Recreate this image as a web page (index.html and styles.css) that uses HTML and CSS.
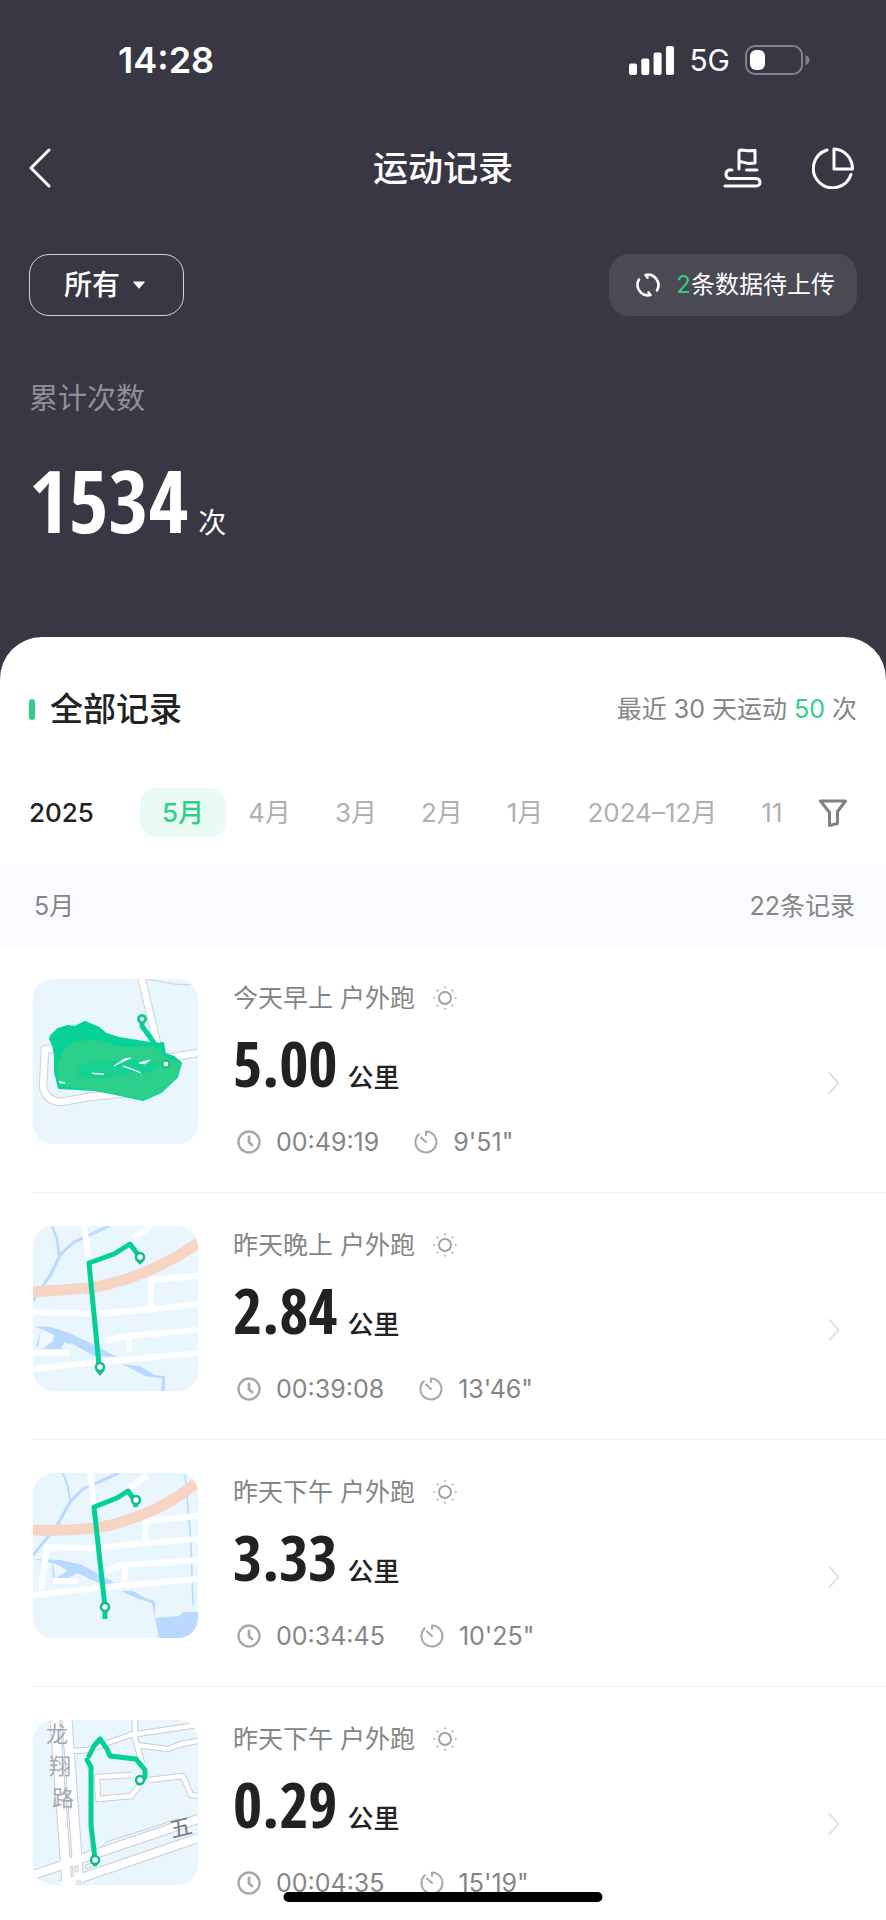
FILE: index.html
```
<!DOCTYPE html>
<html lang="zh-CN">
<head>
<meta charset="utf-8">
<meta name="viewport" content="width=device-width, initial-scale=1">
<title>运动记录</title>
<link rel="stylesheet" href="styles.css">
</head>
<body>
<svg class="sprite" aria-hidden="true">
  <symbol id="sun" viewBox="0 0 24 24"><g fill="none" stroke="#a3a3a3" stroke-width="2" stroke-linecap="round"><circle cx="12" cy="12" r="6"/><path stroke-width="1.6" d="M12 1v.5M12 22.500v.5M1 12h.5M22.500 12h.5M4.200 4.200l.5.5M19.300 19.300l.5.5M4.200 19.800l.5-.5M19.300 4.700l.5-.5"/></g></symbol>
  <symbol id="clock" viewBox="0 0 24 24"><g fill="none" stroke="#a8a8a8"><circle cx="12" cy="12" r="10.500" stroke-width="2.400"/><path stroke-width="2.800" stroke-linecap="round" stroke-linejoin="round" d="M12 7v5.500l3 2.500"/></g></symbol>
  <symbol id="pace" viewBox="0 0 24 24"><g fill="none" stroke="#a8a8a8" stroke-width="2" stroke-linecap="round" stroke-linejoin="round"><path d="M12 5V1.500A10.500 10.500 0 1 1 4.800 4.300"/><path d="M7 7.500l5 4.500"/></g></symbol>
  <symbol id="chevron" viewBox="0 0 12 24"><path d="M1.500 2L10.500 12L1.500 22" fill="none" stroke="#dcdcdc" stroke-width="1.800" stroke-linecap="round" stroke-linejoin="round"/></symbol>
</svg>

<div class="screen">
  <header class="hero">
    <div class="status">
      <span class="status-time">14:28</span>
      <div class="status-icons">
        <svg width="45" height="29" viewBox="0 0 45 29" fill="#fff" aria-hidden="true"><rect y="17.500" width="8" height="11.500" rx="2"/><rect x="12.300" y="12.500" width="8" height="16.500" rx="2"/><rect x="24.600" y="6.500" width="8" height="22.500" rx="2"/><rect x="37" width="8" height="29" rx="2"/></svg>
        <span class="network">5G</span>
        <svg width="65" height="30" viewBox="0 0 65 30" aria-hidden="true"><rect x="1" y="1" width="56" height="28" rx="9" fill="none" stroke="#82818a" stroke-width="2"/><rect x="5" y="5" width="15" height="20" rx="6" fill="#fff"/><path d="M60.500 10v10q4-1.500 4-5t-4-5z" fill="#82818a"/></svg>
      </div>
    </div>

    <nav class="navbar">
      <button class="icon-btn nav-back" aria-label="返回"><svg width="22" height="40" viewBox="0 0 22 40"><path d="M20 2L2 20L20 38" fill="none" stroke="#fff" stroke-width="3" stroke-linecap="round" stroke-linejoin="round"/></svg></button>
      <h1 class="nav-title">运动记录</h1>
      <div class="nav-actions">
        <button class="icon-btn" aria-label="路线"><svg width="40" height="40" viewBox="0 0 40 40" fill="none" stroke="#fff" stroke-width="3" stroke-linecap="round" stroke-linejoin="round"><path d="M17 21V4Q17 2 19 2L26 2.800L33 2.600V15L27 15.600L18 13.500"/><path d="M10 22H7A4.500 4.500 0 0 0 7 30.500H33Q38 30.500 38 34.300T33 38H3"/><path d="M24.500 22H35"/></svg></button>
        <button class="icon-btn" aria-label="统计"><svg width="42" height="42" viewBox="0 0 42 42" fill="none" stroke="#fff" stroke-width="3" stroke-linecap="round" stroke-linejoin="round"><path d="M22 2V22H40.500A19 20 0 0 0 22 2Z"/><path d="M15 3A19.300 19.300 0 1 0 39 27.500"/></svg></button>
      </div>
    </nav>

    <div class="toolbar">
      <button class="filter-btn">所有<svg width="12" height="8" viewBox="0 0 12 8" aria-hidden="true"><path d="M1 .5H11Q12 .5 11.500 1.500L6.700 7Q6 8 5.300 7L.5 1.500Q0 .5 1 .5Z" fill="#fff"/></svg></button>
      <button class="sync-btn">
        <svg width="24" height="24" viewBox="0 0 24 24" fill="none" stroke="#fff" stroke-width="2.600" stroke-linecap="round" stroke-linejoin="round" aria-hidden="true"><path d="M3 6.500A10.500 10.500 0 0 0 14.500 22L12.500 19.500"/><path d="M21 17.500A10.500 10.500 0 0 0 9.500 2L11.500 4.500"/></svg>
        <span><em class="accent">2</em>条数据待上传</span>
      </button>
    </div>

    <section class="total">
      <p class="total-label">累计次数</p>
      <p class="total-value"><strong>1534</strong><span>次</span></p>
    </section>
  </header>

  <main class="sheet">
    <div class="section-head">
      <h2 class="section-title">全部记录</h2>
      <p class="section-note">最近 30 天运动 <em class="accent">50</em> 次</p>
    </div>

    <div class="months">
      <strong class="year">2025</strong>
      <div class="month-tabs">
        <button class="tab tab-active">5月</button>
        <button class="tab">4月</button>
        <button class="tab">3月</button>
        <button class="tab">2月</button>
        <button class="tab">1月</button>
        <button class="tab">2024–12月</button>
        <button class="tab">11</button>
      </div>
      <button class="icon-btn" aria-label="筛选"><svg width="28" height="28" viewBox="0 0 28 28"><path d="M1.500 2H26.500L18.500 12.500V24.500L10.500 26.500V13.500Z" fill="none" stroke="#808080" stroke-width="3" stroke-linejoin="round"/></svg></button>
    </div>

    <div class="group-head"><span>5月</span><span>22条记录</span></div>

    <ul class="records">
      <li><a class="record" href="#r1">
        <svg class="map" viewBox="0 0 165 165" role="img" aria-label="路线图">
          <rect width="165" height="165" fill="#e9f6fe"/>
          <g fill="none" stroke-linejoin="round">
            <path d="M108 -3L124 64M118 65L128 80L170 73M24 70H12L10 108Q13 122 28 123L56 118L94 114" stroke="#d0d1d6" stroke-width="8.500"/>
            <path d="M108 -3L124 64M118 65L128 80L170 73M24 70H12L10 108Q13 122 28 123L56 118L94 114" stroke="#fff" stroke-width="6.500"/>
            <path d="M112 0L141 5L158 6" stroke="#d0d1d6"/>
          </g>
          <path d="M18 57L25 50L35 47L42 48L52 43L66 49L73 55L86 59L123 65L130 64L132 75L141 78L148 84L144 98L128 113L110 121L92 117L78 114L62 111L26 109L22 93L22 77L20 66L17 60Z" fill="#06d199" stroke="#06d199" stroke-width="2" stroke-linejoin="round"/>
          <path d="M31 70L42 62L65 61L91 68L123 67L132 78L148 84L144 98L128 113L110 121L92 117L78 114L62 111L27 107L23 89Z" fill="#2bd08a"/>
          <path d="M48 86L67 82L95 80L127 84L119 94L96 94L75 99L53 99L43 95Z" fill="#10d295" opacity=".75"/>
          <path d="M81 87L91 80L98 79L89 83ZM106 84L117 81L112 85ZM90 87L108 94L99 90ZM59 94L71 95L62 95ZM26 102L32 104L27 104Z" fill="#e9fff5" stroke="#e9fff5"/>
          <path d="M109 39L109 47L124 68" fill="none" stroke="#06d199" stroke-width="5" stroke-linejoin="round"/>
          <circle cx="109" cy="40" r="3.500" fill="#fff" stroke="#18c990" stroke-width="3"/><circle cx="133" cy="85" r="3.500" fill="#fff" stroke="#20c584" stroke-width="2.500"/>
        </svg>
        <div class="info">
          <p class="caption"><span>今天早上 户外跑</span><svg class="ico"><use href="#sun"/></svg></p>
          <p class="distance"><strong>5.00</strong><span>公里</span></p>
          <p class="stats"><span class="stat"><svg class="ico"><use href="#clock"/></svg>00:49:19</span><span class="stat"><svg class="ico"><use href="#pace"/></svg>9'51"</span></p>
        </div>
        <svg class="chev"><use href="#chevron"/></svg>
      </a></li>

      <li><a class="record" href="#r2">
        <svg class="map" viewBox="0 0 165 165" role="img" aria-label="路线图">
          <rect width="165" height="165" fill="#e9f6fe"/>
          <g fill="none" stroke="#b9d9fe">
            <path d="M0 75L18 48L27 29L41 16L76 0" stroke-width="3"/><path d="M19 0L24 13L26 29" stroke-width="2.500"/>
          </g>
          <path d="M0 100L18 101L34 106L67 122L84 131L61 130L38 117L29 123L9 123L13 121L3 120L8 103ZM88 138L107 140L122 149L132 150L132 165H128L129 152L112 150L99 143Z" fill="#b9d9fe"/>
          <path d="M8 103L21 109L20 115L12 121L5 121ZM32 116L38 120L34 124L28 122Z" fill="#eff8ff"/>
          <g fill="none" stroke="#fff" stroke-width="6">
            <path d="M51 0L56 32M118 0L101 12M0 86L63 88L122 83L165 78M0 127H36M0 143L67 136L165 127M72 115L94 110L165 104M96 110V126M118 81V54L165 50"/>
          </g>
          <path d="M0 66L56 62Q111 54 165 17" fill="none" stroke="#f7d4c4" stroke-width="11"/>
          <path d="M107 36L106 30L97 18L81 28L56 37L66 139L67 145" fill="none" stroke="#04cf96" stroke-width="5" stroke-linejoin="round"/>
          <g fill="#fff" stroke="#10bd85" stroke-width="2.500"><path d="M103 33L107 37L111 33M63 143L67 148L71 143" fill="#04cf96"/><circle cx="107" cy="31" r="4"/><circle cx="67" cy="141" r="4"/></g>
        </svg>
        <div class="info">
          <p class="caption"><span>昨天晚上 户外跑</span><svg class="ico"><use href="#sun"/></svg></p>
          <p class="distance"><strong>2.84</strong><span>公里</span></p>
          <p class="stats"><span class="stat"><svg class="ico"><use href="#clock"/></svg>00:39:08</span><span class="stat"><svg class="ico"><use href="#pace"/></svg>13'46"</span></p>
        </div>
        <svg class="chev"><use href="#chevron"/></svg>
      </a></li>

      <li><a class="record" href="#r3">
        <svg class="map" viewBox="0 0 165 165" role="img" aria-label="路线图">
          <rect width="165" height="165" fill="#e9f6fe"/>
          <g fill="none" stroke="#b9d9fe">
            <path d="M0 82L24 53L37 29L50 16L86 0" stroke-width="3"/><path d="M30 0L35 14L37 27" stroke-width="2"/><path d="M152 0L158 70L160 132" stroke-width="1.500"/>
          </g>
          <path d="M0 86L28 87L49 92L82 110L73 113L44 100L36 105H20L19 90ZM88 118L100 118L114 126L122 128V145L146 143L150 139L165 139V165H126L119 130L103 125Z" fill="#b9d9fe"/>
          <path d="M20 90L34 97L30 101L22 105Z" fill="#eff8ff"/>
          <g fill="none" stroke="#fff" stroke-width="6">
            <path d="M57 0L61 32M114 2L97 15M0 122L83 113L165 106M8 116L14 74L61 75L102 71L165 66M20 108H45M72 98L92 92L165 87M92 92V107M112 69V48L165 43"/>
          </g>
          <path d="M0 57Q65 59 94 47Q133 35 163 10" fill="none" stroke="#f7d4c4" stroke-width="11"/>
          <path d="M103 34L102 28L95 18L84 25L61 34L72 134V146" fill="none" stroke="#04cf96" stroke-width="5" stroke-linejoin="round"/>
          <g fill="#fff" stroke="#10bd85" stroke-width="2.500"><circle cx="103" cy="27" r="4"/><circle cx="72" cy="134" r="4"/></g>
        </svg>
        <div class="info">
          <p class="caption"><span>昨天下午 户外跑</span><svg class="ico"><use href="#sun"/></svg></p>
          <p class="distance"><strong>3.33</strong><span>公里</span></p>
          <p class="stats"><span class="stat"><svg class="ico"><use href="#clock"/></svg>00:34:45</span><span class="stat"><svg class="ico"><use href="#pace"/></svg>10'25"</span></p>
        </div>
        <svg class="chev"><use href="#chevron"/></svg>
      </a></li>

      <li><a class="record" href="#r4">
        <svg class="map" viewBox="0 0 165 165" role="img" aria-label="路线图">
          <rect width="165" height="165" fill="#e9f6fe"/>
          <g fill="none" stroke-linejoin="round">
            <g stroke="#cccdd3">
              <path d="M22 0L34 165M34 0L46 165" stroke-width="11"/>
              <path d="M0 155L165 99M28 165L165 118" stroke-width="10"/>
              <path d="M40 31L55 30L97 15L165 5M102 0V18L109 43M103 25L135 29L148 24L165 21M116 60L150 56L158 75L165 76M99 55L64 57L65 79L98 76L107 65" stroke-width="6.500"/>
            </g>
            <g stroke="#fff">
              <path d="M22 0L34 165M34 0L46 165" stroke-width="9"/>
              <path d="M0 155L165 99M28 165L165 118" stroke-width="8"/>
              <path d="M40 31L55 30L97 15L165 5M102 0V18L109 43M103 25L135 29L148 24L165 21M116 60L150 56L158 75L165 76M99 55L64 57L65 79L98 76L107 65" stroke-width="4.500"/>
            </g>
          </g>
          <g stroke="#cccdd3" fill="#eef5fa"><path d="M42 146H45V152H42ZM44 161H48V165H44ZM53 145L62 142V146L53 149Z"/><path d="M68 128L73 122L145 99" fill="none"/></g>
          <g class="map-text" fill="#a5a8b4"><text x="13" y="22">龙</text><text x="16" y="54">翔</text><text x="19" y="86">路</text></g>
          <text class="map-text" fill="#74758c" x="139" y="118" transform="rotate(-14 139 118)">五</text>
          <path d="M106 63L112 57V50L103 39L77 36L74 29L67 19L61 26L56 36M54 40L58 47V105L62 139V144" fill="none" stroke="#04cf96" stroke-width="5" stroke-linejoin="round" stroke-linecap="round"/>
          <g fill="#fff" stroke="#10bd85" stroke-width="2.500"><circle cx="107" cy="60" r="4"/><circle cx="62" cy="140" r="4"/></g>
        </svg>
        <div class="info">
          <p class="caption"><span>昨天下午 户外跑</span><svg class="ico"><use href="#sun"/></svg></p>
          <p class="distance"><strong>0.29</strong><span>公里</span></p>
          <p class="stats"><span class="stat"><svg class="ico"><use href="#clock"/></svg>00:04:35</span><span class="stat"><svg class="ico"><use href="#pace"/></svg>15'19"</span></p>
        </div>
        <svg class="chev"><use href="#chevron"/></svg>
      </a></li>
    </ul>
  </main>
  <div class="home-bar"></div>
</div>
</body>
</html>
```

FILE: styles.css
```
* { box-sizing: border-box; margin: 0; padding: 0; }

body {
  font-family: Inter, "Noto Sans CJK SC", sans-serif;
  font-size: 25px;
  line-height: 32px;
  color: #222;
  background: #383743;
}

button { font: inherit; color: inherit; background: none; border: 0; cursor: pointer; }
a { color: inherit; text-decoration: none; }
em { font-style: normal; }
ul { list-style: none; }
svg { display: block; flex: none; }
.sprite { position: absolute; width: 0; height: 0; }
.accent { color: #2fcf8b; }
.icon-btn { display: flex; }

.screen { position: relative; display: flex; flex-direction: column; height: 100vh; overflow: hidden; }

.hero { flex: none; padding: 0 29px 64px; color: #fff; }

.status { display: flex; justify-content: space-between; align-items: center; height: 120px; padding: 0 47px 0 89px; }
.status-time { font-size: 36px; font-weight: 600; }
.status-icons { display: flex; align-items: center; gap: 15px; }
.network { font-size: 30px; }

.navbar { display: grid; grid-template-columns: 1fr auto 1fr; align-items: center; height: 96px; }
.nav-title { font-size: 35px; line-height: 48px; font-weight: 500; }
.nav-actions { display: flex; justify-content: flex-end; align-items: center; gap: 50px; padding-right: 3px; }

.toolbar { display: flex; justify-content: space-between; align-items: center; margin-top: 38px; }
.filter-btn { display: flex; align-items: center; gap: 13px; height: 62px; padding: 0 38px 0 34px; border: 1px solid #d5d4da; border-radius: 20px; font-size: 28px; font-weight: 500; }
.sync-btn { display: flex; align-items: center; gap: 16px; height: 62px; padding: 0 22px 0 27px; border-radius: 20px; background: #4a4954; font-size: 24px; }

.total { padding-top: 67px; }
.total-label { font-size: 29px; color: #908f98; }
.total-value { display: flex; align-items: baseline; gap: 10px; margin-top: 35px; line-height: 100px; font-size: 28px; }
.total-value strong, .distance strong { font-family: "Noto Sans ExtraCondensed", "Open Sans Condensed", "Roboto Condensed", "Liberation Sans Narrow", Roboto, sans-serif; font-weight: 700; }
.total-value strong { font-size: 86px; }

.sheet { flex: 1; display: flex; flex-direction: column; min-height: 0; background: #fff; border-radius: 42px 42px 0 0; overflow: hidden; }

.section-head { display: flex; justify-content: space-between; align-items: center; padding: 48px 29px 0; }
.section-title { display: flex; align-items: center; gap: 15px; font-size: 33px; line-height: 48px; font-weight: 500; }
.section-title::before { content: ""; width: 6px; height: 21px; border-radius: 3px; background: #2fd08c; }
.section-note { color: #858585; }

.months { display: flex; align-items: center; padding: 55px 39px 28px 29px; }
.year { flex: none; width: 111px; font-size: 26px; font-weight: 500; }
.month-tabs { flex: 1; display: flex; min-width: 0; margin-right: 30px; overflow: hidden; }
.tab { flex: none; height: 49px; padding: 0 22px; border-radius: 16px; color: #b0b0b0; font-size: 26px; white-space: nowrap; }
.tab:last-child { padding-right: 0; }
.tab-active { background: #e9fbf3; color: #2fcf8b; font-weight: 500; }

.group-head { display: flex; justify-content: space-between; align-items: center; height: 81px; padding: 0 31px 0 34px; background: #fafbfe; color: #858585; }

.records { flex: 1; min-height: 0; overflow: hidden; padding-left: 33px; }
.record { display: flex; align-items: flex-start; height: 247px; padding: 33px 46px 0 0; border-bottom: 1px solid #f2f2f2; }
.map { width: 165px; height: 165px; border-radius: 20px; }
.map-text { font-size: 22px; }
.info { flex: 1; padding-left: 35px; }
.caption { display: flex; align-items: center; gap: 18px; line-height: 38px; color: #858585; }
.ico { width: 24px; height: 24px; }
.distance { display: flex; align-items: baseline; gap: 10px; height: 92px; line-height: 92px; font-size: 26px; font-weight: 500; }
.distance strong { font-size: 63px; }
.stats { display: flex; gap: 35px; padding: 17px 0 0 4px; color: #858585; }
.stat { display: flex; align-items: center; gap: 15px; }
.chev { width: 12px; height: 24px; margin-top: 92px; }

.home-bar { position: absolute; left: 50%; bottom: 18px; width: 36%; height: 10px; transform: translateX(-50%); border-radius: 5px; background: #000; }
```
